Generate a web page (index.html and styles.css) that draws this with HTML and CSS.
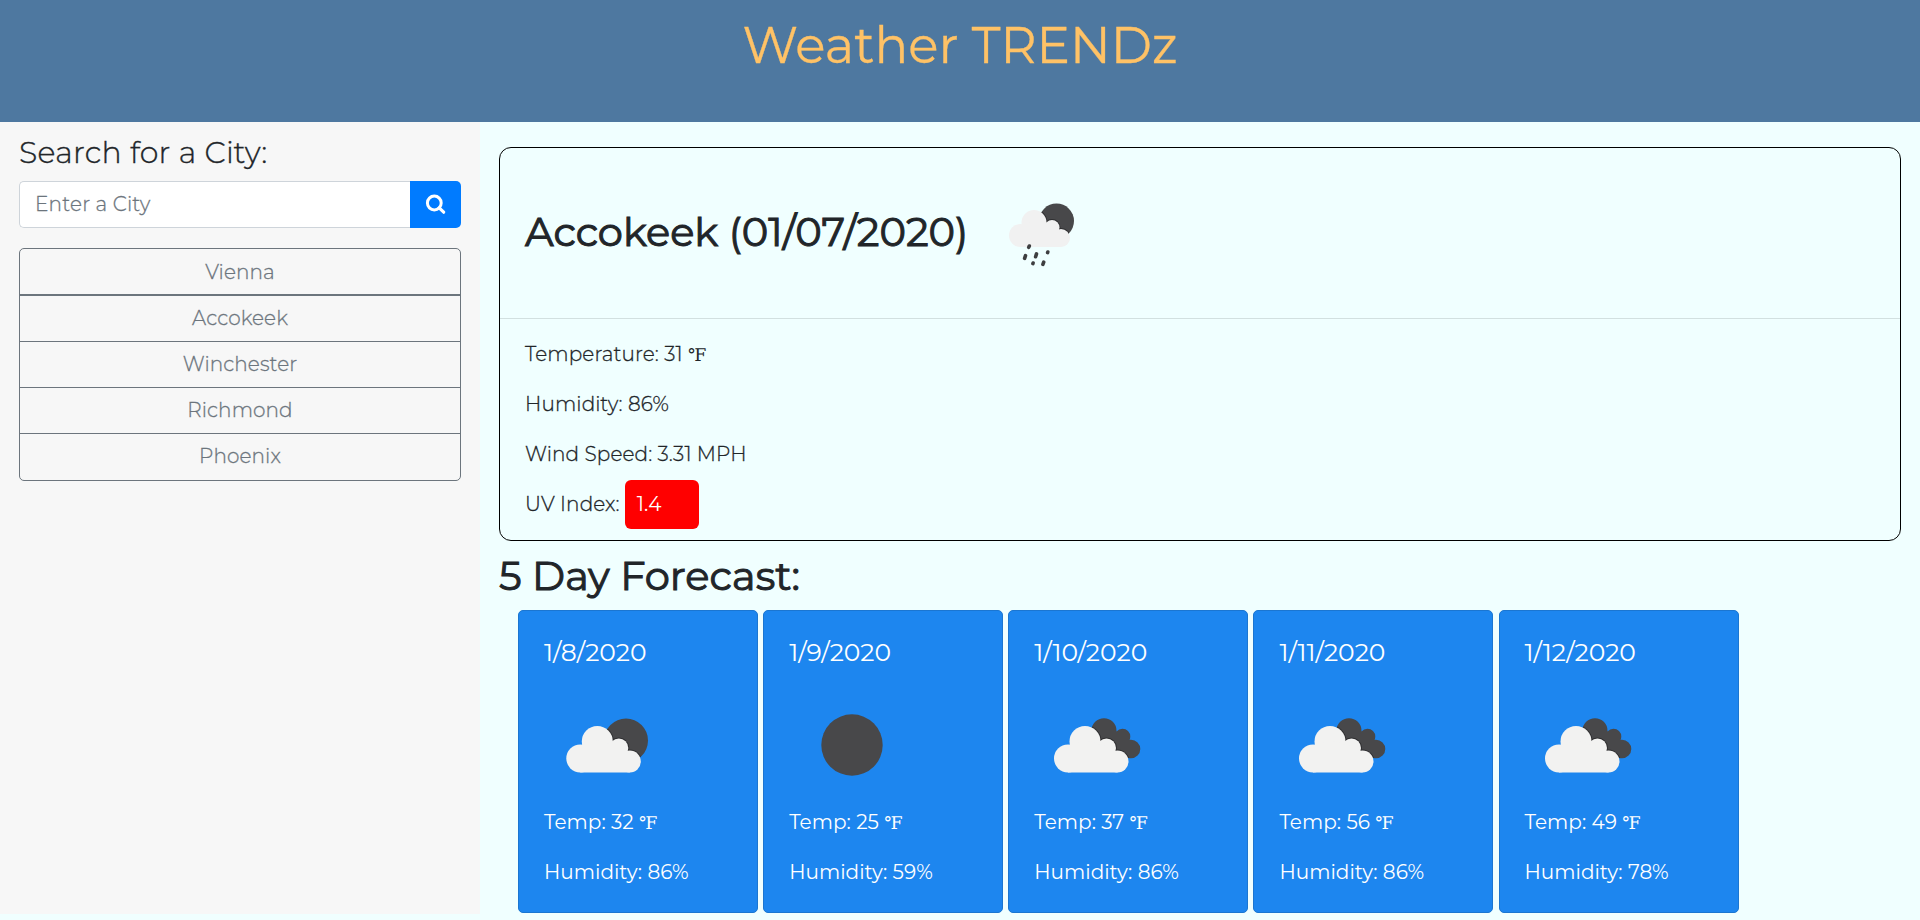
FILE: index.html
```html
<!DOCTYPE html>
<html lang="en">
<head>
<meta charset="utf-8">
<title>Weather TRENDz</title>
<link rel="stylesheet" href="styles.css">
</head>
<body>
<svg class="defs" width="0" height="0">
  <defs>
    <clipPath id="disc"><circle cx="82" cy="58.500" r="22"/></clipPath>
    <clipPath id="back"><circle cx="70" cy="48.700" r="12.500"/><circle cx="88.500" cy="54.500" r="7.800"/><circle cx="97" cy="67" r="9.300"/><path d="M60 50h30l5 26H70z"/></clipPath>
    <clipPath id="moon"><circle cx="76.500" cy="51" r="17.500"/></clipPath>
    <g id="cloud"><circle cx="34" cy="76.500" r="14"/><circle cx="51" cy="59.500" r="15.500"/><circle cx="72.500" cy="66" r="9.500"/><circle cx="83.500" cy="79.500" r="11"/><path d="M34 90.500V64l17-6 20 6 12.500 8v18.500z"/></g>
    <symbol id="few" viewBox="0 0 125 125"><circle cx="82" cy="58.500" r="22" fill="#48484a"/><g clip-path="url(#disc)"><use href="#cloud" x="2.300" fill="#2f2f31" stroke="#2f2f31" stroke-width="2"/></g><use href="#cloud" x="2.300" fill="#f2f2f1"/></symbol>
    <symbol id="clear" viewBox="0 0 125 125"><circle cx="63" cy="63" r="30.700" fill="#48484a"/></symbol>
    <symbol id="broken" viewBox="0 0 125 125"><g clip-path="url(#back)"><rect width="125" height="125" fill="#48484a"/><use href="#cloud" fill="#2f2f31" stroke="#2f2f31" stroke-width="2"/></g><use href="#cloud" fill="#f2f2f1"/></symbol>
    <g id="rain-cloud"><circle cx="40.500" cy="65.500" r="11.500"/><circle cx="54" cy="52.500" r="12.500"/><circle cx="72" cy="57.500" r="7.500"/><circle cx="81" cy="68" r="9"/><path d="M40.500 77V55L54 51l17 3 10 8v15z"/></g>
    <symbol id="rain" viewBox="0 0 125 125"><circle cx="76.500" cy="51" r="17.500" fill="#48484a"/><g clip-path="url(#moon)"><use href="#rain-cloud" fill="#2f2f31" stroke="#2f2f31" stroke-width="2"/></g><use href="#rain-cloud" fill="#f1f1f1"/><path fill="none" stroke="#3e3e40" stroke-width="3.600" stroke-linecap="round" d="M48.700 77.400l.6-1.400M44.600 88.400l.9-2.800M55.600 86.700l.9-2.800M67.600 82.600l.2-.6M52.900 93.600l.2-.6M62.900 94.400l.8-2.200"/></symbol>
  </defs>
</svg>
<header class="banner"><h1><span>Weather TRENDz</span></h1></header>
<div class="layout">
  <aside class="sidebar">
    <h4>Search for a City:</h4>
    <form class="search">
      <input type="text" placeholder="Enter a City" aria-label="City">
      <button type="button" aria-label="Search"><svg width="21" height="21" viewBox="0 0 21 21"><circle cx="9.300" cy="9" r="6.900" fill="none" stroke="#fff" stroke-width="3"/><path d="M14.200 13.900l4.500 4.300" stroke="#fff" stroke-width="3.200" stroke-linecap="round"/></svg></button>
    </form>
    <div class="cities"><button>Vienna</button><button>Accokeek</button><button>Winchester</button><button>Richmond</button><button>Phoenix</button></div>
  </aside>
  <main class="content">
    <section class="current">
      <div class="current-head"><h2><span>Accokeek (01/07/2020)</span></h2><svg class="icon"><use href="#rain"/></svg></div>
      <div class="current-body">
        <p><span>Temperature: 31</span> <span class="unit">℉</span></p>
        <p><span>Humidity: 86%</span></p>
        <p><span>Wind Speed: 3.31 MPH</span></p>
        <p><span>UV Index:</span> <span class="uv">1.4</span></p>
      </div>
    </section>
    <h2 class="forecast-title"><span>5 Day Forecast:</span></h2>
    <div class="forecast">
      <article class="day"><h5><span>1/8/2020</span></h5><svg class="icon"><use href="#few"/></svg><p><span>Temp: 32</span> <span class="unit">℉</span></p><p><span>Humidity: 86%</span></p></article>
      <article class="day"><h5><span>1/9/2020</span></h5><svg class="icon"><use href="#clear"/></svg><p><span>Temp: 25</span> <span class="unit">℉</span></p><p><span>Humidity: 59%</span></p></article>
      <article class="day"><h5><span>1/10/2020</span></h5><svg class="icon"><use href="#broken"/></svg><p><span>Temp: 37</span> <span class="unit">℉</span></p><p><span>Humidity: 86%</span></p></article>
      <article class="day"><h5><span>1/11/2020</span></h5><svg class="icon"><use href="#broken"/></svg><p><span>Temp: 56</span> <span class="unit">℉</span></p><p><span>Humidity: 86%</span></p></article>
      <article class="day"><h5><span>1/12/2020</span></h5><svg class="icon"><use href="#broken"/></svg><p><span>Temp: 49</span> <span class="unit">℉</span></p><p><span>Humidity: 78%</span></p></article>
    </div>
  </main>
</div>
</body>
</html>
```
FILE: styles.css
```css
* { box-sizing: border-box; }
body { margin: 0; height: 920px; overflow: hidden; background: #f0ffff; color: #212529; font: 300 20px/30px Montserrat, Inter, sans-serif; }
h1, h2, h4, h5, p { margin: 0; }
.defs { display: block; }
.banner { height: 122px; padding-top: 16px; background: #4e78a0; text-align: center; }
.banner h1 { color: #ffc266; font-size: 50px; line-height: 60px; font-weight: 400; -webkit-text-stroke: 0.3px #ffc266; }
.layout { display: flex; height: 792px; }
.sidebar { width: 480px; padding: 12px 19px 0; background: #f7f7f7; }
.sidebar h4 { font-size: 30px; line-height: 37px; font-weight: 300; letter-spacing: 0.28px; -webkit-text-stroke: 0.35px #212529; }
.search { display: flex; height: 47px; margin-top: 10px; }
.search input { flex: 1; min-width: 0; padding: 0 15px 2px; border: 1px solid #ced4da; border-right: 0; border-radius: 5px 0 0 5px; background: #fff; font: inherit; letter-spacing: 0.2px; }
.search input::placeholder { color: #6c757d; opacity: 1; -webkit-text-stroke: 0.3px #6c757d; }
.search button { width: 51px; padding: 0; border: 0; border-radius: 0 5px 5px 0; background: #007bff; display: flex; align-items: center; justify-content: center; }
.cities { display: flex; flex-direction: column; margin-top: 20px; height: 233px; border: 1px solid #6c757d; border-radius: 5px; }
.cities button { flex: 0 0 46px; padding: 0 0 1px; border: 0; border-bottom: 1px solid #6c757d; background: none; color: #6c757d; font: inherit; letter-spacing: 0.1px; -webkit-text-stroke: 0.3px #6c757d; }
.cities button:first-child { flex-basis: 47px; padding: 0; border-bottom-width: 2px; }
.cities button:last-child { padding-bottom: 2px; border-bottom: 0; }
.content { flex: 1; padding: 25px 19px 0 18px; }
.current { height: 394px; margin-left: 1px; border: 1px solid #000; border-radius: 12px; }
.current-head { display: flex; height: 171px; padding: 22px 25px; border-bottom: 1px solid #d2e0e0; }
.current-head h2 { width: 455px; line-height: 124px; white-space: nowrap; }
.current h2, .forecast-title { font-size: 40px; font-weight: 400; -webkit-text-stroke: 1px #212529; }
.icon { display: block; width: 125px; height: 125px; }
.current-body { padding: 20px 25px 0; letter-spacing: 0.12px; -webkit-text-stroke: 0.3px #212529; }
.current-body p { height: 30px; margin-bottom: 20px; }
.uv { display: inline-block; width: 74px; height: 49px; margin: -11px 0 -9px; padding: 9px 12px; border-radius: 6px; background: red; color: #fff; font-weight: 400; vertical-align: middle; -webkit-text-stroke: 0; }
.forecast-title { line-height: 48px; margin: 11px 0 10px 1px; }
.forecast { display: flex; gap: 5.14px; margin-left: 20px; }
.day { width: 240px; height: 303px; padding: 25px; border: 1px solid #1b76d1; border-radius: 5px; background: #1d86ef; color: #fff; font-weight: 400; }
.day h5 { font-size: 25px; line-height: 30px; font-weight: 400; margin: 1px 0 15px; }
.day p { height: 30px; margin-bottom: 20px; letter-spacing: 0.05px; }
.unit { font-family: "Liberation Serif", "DejaVu Serif", serif; font-size: 17.5px; line-height: 1; -webkit-text-stroke: 0; }
```
